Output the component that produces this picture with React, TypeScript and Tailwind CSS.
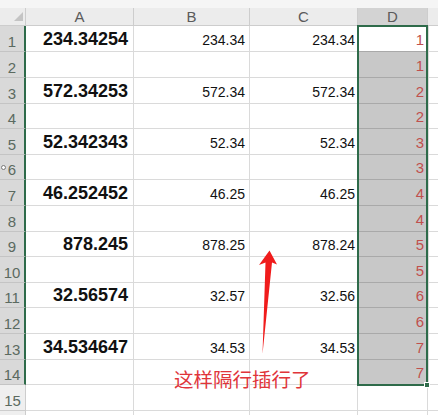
import React from "react";

const heights = [26, 26, 26, 25, 26, 25, 26, 26, 25, 26, 25, 26, 26, 25];
const aVals: Record<number, string> = { 1: "234.34254", 3: "572.34253", 5: "52.342343", 7: "46.252452", 9: "878.245", 11: "32.56574", 13: "34.534647" };
const bVals: Record<number, string> = { 1: "234.34", 3: "572.34", 5: "52.34", 7: "46.25", 9: "878.25", 11: "32.57", 13: "34.53" };
const cVals: Record<number, string> = { 1: "234.34", 3: "572.34", 5: "52.34", 7: "46.25", 9: "878.24", 11: "32.56", 13: "34.53" };

export default function App() {
  return (
    <div className="relative w-[438px] h-[415px] overflow-hidden bg-white font-['Liberation_Sans',Arial,sans-serif]">
      <div className="h-[8px] bg-[#f5f5f5]" />
      <div className="grid grid-cols-[26px_108px_116px_108px_70px_10px] h-[18px] bg-[#ececec] border-b border-[#cdcdcd] text-[15px] leading-none text-[#5a5a5a]">
        <div className="relative border-r border-[#cdcdcd]">
          <svg className="absolute left-[14px] top-[4px]" width="10" height="10" viewBox="0 0 10 10">
            <polygon points="9,0 9,9 0,9" fill="#c4c4c4" />
          </svg>
        </div>
        <div className="flex items-end justify-center pb-[1px] border-r border-[#cdcdcd]">A</div>
        <div className="flex items-end justify-center pb-[1px] border-r border-[#cdcdcd]">B</div>
        <div className="flex items-end justify-center pb-[1px] border-r border-[#cdcdcd]">C</div>
        <div className="flex items-end justify-center pb-[1px] border-r border-[#cdcdcd] bg-[#d3d3d3]">D</div>
        <div />
      </div>
      {heights.map((h, i) => {
        const r = i + 1;
        const d = Math.ceil(r / 2);
        return (
          <div key={r} className="grid grid-cols-[26px_108px_116px_108px_70px_10px]" style={{ height: h }}>
            <div className="relative flex items-end justify-center pb-[2px] bg-[#d9d9d9] border-b border-[#c4c4c4] border-r-2 border-r-[#2e6b4a] text-[15px] leading-none text-[#5b6a60]">
              {r === 6 && <span className="absolute left-[1px] top-[10px] w-[5px] h-[5px] rounded-full border border-[#777] bg-white" />}
              {r}
            </div>
            <div className="flex items-end justify-end pr-[5px] pb-[3px] border-b border-r border-[#dadada] text-[18px] font-bold leading-none text-[#111]">{aVals[r] ?? ""}</div>
            <div className="flex items-end justify-end pr-[4px] pb-[4px] border-b border-r border-[#dadada] text-[14px] leading-none text-[#111]">{bVals[r] ?? ""}</div>
            <div className="flex items-end justify-end pr-[2px] pb-[4px] border-b border-r border-[#dadada] text-[14px] leading-none text-[#111]">{cVals[r] ?? ""}</div>
            <div className={`flex items-end justify-end pr-[4px] pb-[4px] border-b border-[#a9a9a9] text-[15px] leading-none text-[#c0504d] ${r === 1 ? "bg-white" : "bg-[#c8c8c8]"}`}>{d}</div>
            <div className="border-b border-l border-[#dadada]" />
          </div>
        );
      })}
      {[15, 16].map((r) => (
        <div key={r} className="grid grid-cols-[26px_108px_116px_108px_70px_10px] h-[26px]">
          <div className="flex items-end justify-center pb-[2px] bg-[#efefef] border-b border-r border-[#cdcdcd] text-[15px] leading-none text-[#5b6a60]">{r === 15 ? r : ""}</div>
          <div className="border-b border-r border-[#dadada]" />
          <div className="border-b border-r border-[#dadada]" />
          <div className="border-b border-r border-[#dadada]" />
          <div className="border-b border-r border-[#dadada]" />
          <div className="border-b border-[#dadada]" />
        </div>
      ))}
      {/* selection box */}
      <div className="absolute left-[357px] top-[25px] w-[71px] h-[361px] border-2 border-[#2e6b4a]" />
      <div className="absolute left-[424px] top-[382px] w-[6px] h-[6px] bg-[#2e6b4a] border border-white" />
      {/* arrow */}
      <svg className="absolute left-0 top-0" width="438" height="415" viewBox="0 0 438 415">
        <polygon points="269.5,250.5 277,264.5 272,262.5 262.5,354 265.5,262.5 259,265" fill="#f01c1c" />
      </svg>
      <div className="absolute left-[174px] top-[369px] text-[19.5px] leading-none text-[#e0353a] font-['Noto_Sans_CJK_SC',sans-serif]">
        这样隔行插行了
      </div>
    </div>
  );
}
